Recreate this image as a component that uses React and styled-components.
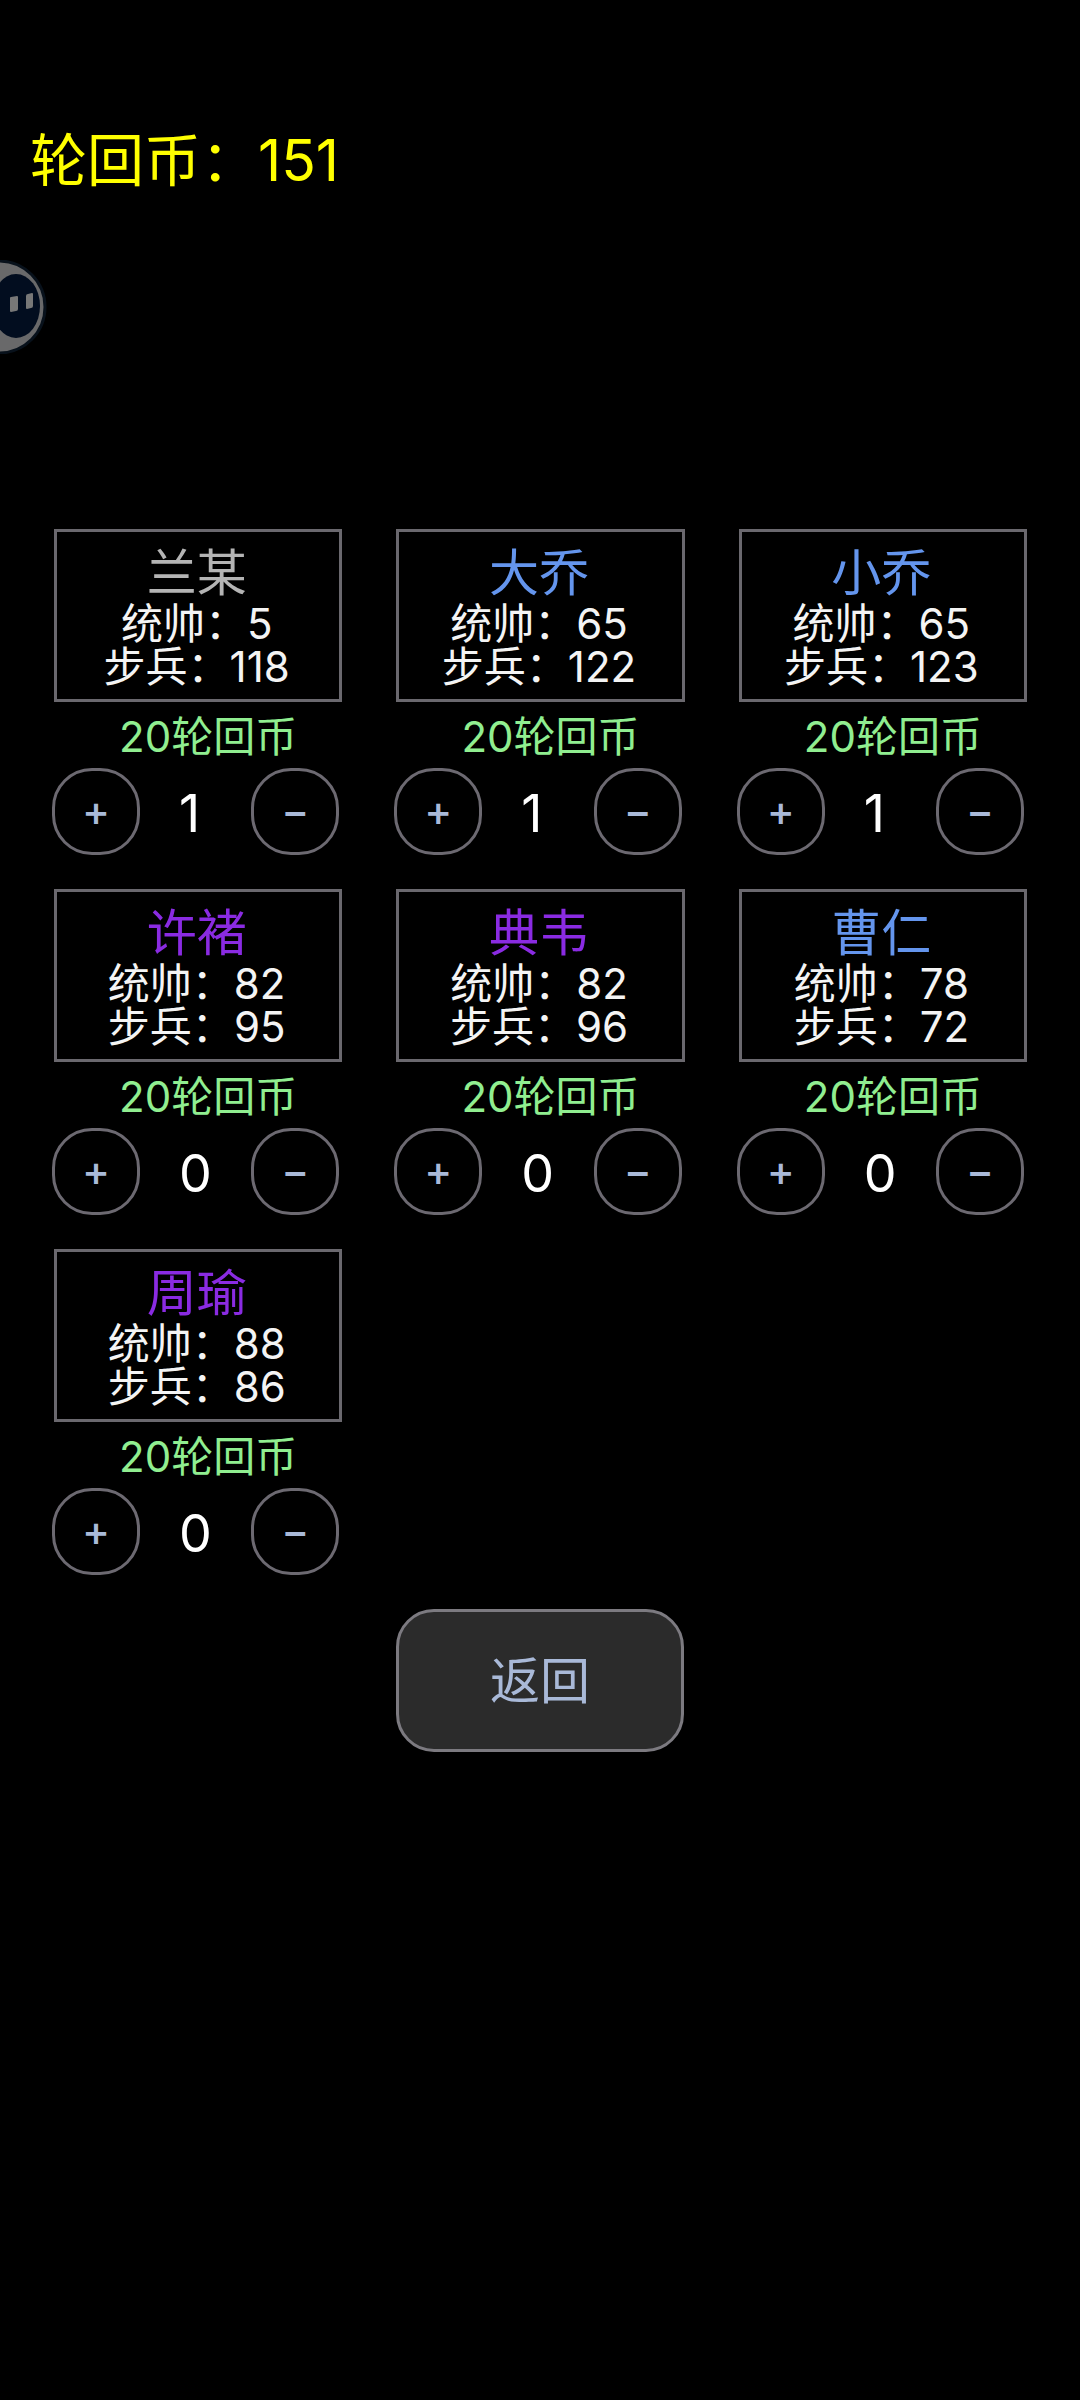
import React, { useState } from "react";
import styled, { createGlobalStyle } from "styled-components";

const heroes = [
  { name: "兰某", color: "#b4b4b4", command: 5, infantry: 118, count: 1 },
  { name: "大乔", color: "#6495ed", command: 65, infantry: 122, count: 1 },
  { name: "小乔", color: "#6495ed", command: 65, infantry: 123, count: 1 },
  { name: "许褚", color: "#8a2be2", command: 82, infantry: 95, count: 0 },
  { name: "典韦", color: "#8a2be2", command: 82, infantry: 96, count: 0 },
  { name: "曹仁", color: "#6495ed", command: 78, infantry: 72, count: 0 },
  { name: "周瑜", color: "#8a2be2", command: 88, infantry: 86, count: 0 },
];

const Hero = ({ hero }) => {
  const [count, setCount] = useState(hero.count);

  return (
    <HeroItem>
      <Card>
        <Name $color={hero.color}>{hero.name}</Name>
        <Stat>统帅：{hero.command}</Stat>
        <Stat>步兵：{hero.infantry}</Stat>
      </Card>
      <Price>20轮回币</Price>
      <Controls>
        <RoundButton
          aria-label={`增加${hero.name}`}
          onClick={() => setCount(count + 1)}
        >
          +
        </RoundButton>
        <Count>{count}</Count>
        <RoundButton
          aria-label={`减少${hero.name}`}
          onClick={() => setCount(Math.max(0, count - 1))}
        >
          −
        </RoundButton>
      </Controls>
    </HeroItem>
  );
};

const App = () => {
  return (
    <Page>
      <GlobalStyle />
      <Coins>轮回币：151</Coins>
      <Assistant aria-label="助手">
        <svg width="48" height="94" viewBox="0 0 48 94" aria-hidden="true">
          <circle cx="-1" cy="47" r="46" fill="#69696a" stroke="#08111b" strokeWidth="3" />
          <ellipse cx="16" cy="46" rx="24" ry="32" fill="#020d1f" />
          <path d="M10 38q0-1 1-1l6-1q1 0 1 1v12q0 2-2 2l-5 1q-1 0-1-1z" fill="#777" />
          <path d="M26 36q0-2 2-2l4-1q1 0 1 1v12q0 2-2 2l-4 1q-1 0-1-1z" fill="#777" />
        </svg>
      </Assistant>
      <Grid>
        {heroes.map((hero) => (
          <Hero key={hero.name} hero={hero} />
        ))}
      </Grid>
      <Footer>
        <BackButton>返回</BackButton>
      </Footer>
    </Page>
  );
};

const GlobalStyle = createGlobalStyle`
  body {
    margin: 0;
    background-color: #000000;
  }

  * {
    box-sizing: border-box;
  }

  button {
    font-family: inherit;
    cursor: pointer;
  }
`;

const Page = styled.main`
  min-height: 100vh;
  padding-top: 126px;
  background-color: #000000;
  color: #f4f4f4;
  font-family: Inter, "Noto Sans CJK SC", sans-serif;
`;

const Coins = styled.h1`
  margin: 0 0 333px;
  padding-left: 30px;
  color: #ffff00;
  font-size: 57px;
  font-weight: 400;
  line-height: 70px;
`;

/* floats over the left edge of the screen */
const Assistant = styled.button`
  position: fixed;
  top: 260px;
  left: 0;
  padding: 0;
  border: 0;
  background: none;

  svg {
    display: block;
  }
`;

const Grid = styled.div`
  display: grid;
  grid-template-columns: repeat(3, 1fr);
  column-gap: 52px;
  row-gap: 34px;
  padding: 0 53px 0 52px;
`;

const HeroItem = styled.section`
  display: flex;
  flex-direction: column;
`;

const Card = styled.div`
  margin-left: 2px;
  padding: 12px 3px 11px 0;
  border: 3px solid #6a686e;
  text-align: center;
`;

const Name = styled.h2`
  margin: 0;
  color: ${(props) => props.$color};
  font-size: 50px;
  font-weight: 400;
  line-height: 58px;
`;

const Stat = styled.p`
  margin: 0;
  font-size: 42px;
  line-height: 43px;
`;

const Price = styled.p`
  margin: 0;
  padding: 5px 0 1px 22px;
  color: #90ee90;
  font-size: 42px;
  line-height: 60px;
  text-align: center;
`;

const Controls = styled.div`
  display: flex;
  align-items: center;
  padding-right: 3px;
`;

const RoundButton = styled.button`
  width: 88px;
  height: 87px;
  padding: 0 0 2px;
  border: 3px solid #6c6971;
  border-radius: 40px;
  background-color: #000000;
  color: #a9b9d8;
  font-size: 42px;
  font-weight: 500;
  line-height: 60px;
`;

const Count = styled.output`
  flex: 1;
  padding: 4px 0 0 39px;
  color: #ffffff;
  font-size: 52px;
  line-height: 60px;
`;

const Footer = styled.footer`
  display: flex;
  justify-content: center;
  padding-top: 34px;
`;

const BackButton = styled.button`
  width: 288px;
  height: 143px;
  padding: 0;
  border: 3px solid #7c7a80;
  border-radius: 38px;
  background-color: #2b2b2b;
  color: #a9b9d8;
  font-size: 50px;
  line-height: 60px;
`;

export default App;
